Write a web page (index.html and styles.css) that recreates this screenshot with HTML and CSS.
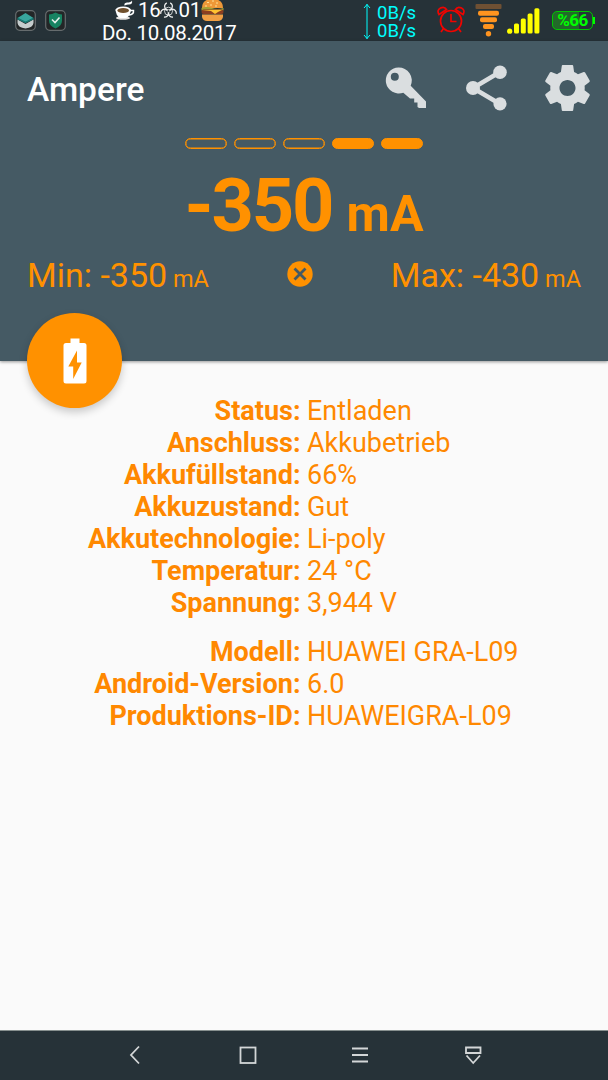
FILE: index.html
```
<!DOCTYPE html>
<html lang="de">
<head>
    <meta charset="UTF-8">
    <title>Ampere</title>
    <meta name="viewport" content="width=device-width, initial-scale=1.0">
    <link rel="stylesheet" href="styles.css">
</head>
<body>
    <div class="status-bar">
        <div class="notifications">
            <svg width="21" height="21" viewBox="0 0 21 21">
                <rect x="0.7" y="0.7" width="19.6" height="19.6" rx="4" fill="#222627" stroke="#666c6e" stroke-width="1.2"/>
                <path d="M2.5 9.5L10.5 14L18.5 9.5V13Q18 17.5 10.5 18.5Q3 17.5 2.5 13Z" fill="#c5cdce"/>
                <path d="M2.5 8L10.5 3L18.5 8L10.5 12Z" fill="#38a69d"/>
                <path d="M2.5 8.5L10.5 12.5L18.5 8.5" fill="none" stroke="#167b75" stroke-width="1.4"/>
            </svg>
            <svg width="21" height="21" viewBox="0 0 21 21">
                <rect x="0.7" y="0.7" width="19.6" height="19.6" rx="4" fill="#222627" stroke="#666c6e" stroke-width="1.2"/>
                <path d="M10.5 2.5Q14 4.5 17 4.5V11Q17 15.5 10.5 18.5Q4 15.5 4 11V4.5Q7 4.5 10.5 2.5Z" fill="#178362"/>
                <path d="M7 9.5L10 12.5L14.5 7.5" fill="none" stroke="#e8efec" stroke-width="1.6"/>
            </svg>
        </div>
        <div class="clock">
            <div class="time">
                <svg class="cup" width="20" height="20" viewBox="0 0 20 20">
                    <path d="M10 6Q8 3 12 2.5Q16 2.5 17 0.5Q18 5 13 4.5Q10 4.5 10 6Z" fill="#fff"/>
                    <ellipse cx="8" cy="18" rx="7" ry="1.7" fill="#e4e1df"/>
                    <path d="M0.5 9.5Q1 16 5 18H11Q15.5 16 16 9.5Z" fill="#fff"/>
                    <path d="M15 10.5H18.5Q19 14.5 14 15" fill="none" stroke="#fff" stroke-width="1.5"/>
                    <ellipse cx="8.2" cy="10" rx="7.7" ry="3.6" fill="#fff"/>
                    <ellipse cx="8.2" cy="10.6" rx="5.8" ry="2.5" fill="#71502d"/>
                </svg>
                <span>16</span>
                <svg class="biohazard" width="17" height="16" viewBox="0 0 17 16" fill="none" stroke="#eceeee">
                    <path d="M6.8 0.8A3.9 3.9 0 1 0 10.2 0.8" stroke-width="1.3"/>
                    <path d="M0.8 11.8A3.9 3.9 0 1 1 4 15" stroke-width="1.3"/>
                    <path d="M16.2 11.8A3.9 3.9 0 1 0 13 15" stroke-width="1.3"/>
                    <circle cx="8.5" cy="9.2" r="4" stroke-width="0.8"/>
                    <circle cx="8.5" cy="9.2" r="1.1" fill="#263238" stroke="none"/>
                </svg>
                <span>01</span>
                <svg class="burger" width="23" height="23" viewBox="0 0 23 23">
                    <path d="M1 9Q1 0 11.5 0Q22 0 22 9Z" fill="#ee9838"/>
                    <path d="M6 3.5H8M11 2H13M15 4H17M9 6H11M14 7H16M4 7H6" stroke="#ffdf94"/>
                    <path d="M0.5 9Q6 7 11 9T22.5 9V11.5H0.5Z" fill="#a5a034"/>
                    <rect x="0.5" y="10.5" width="22" height="4.5" rx="2" fill="#8c3f20"/>
                    <path d="M1 11H21L17 13L14 15L10 12Z" fill="#ffc331"/>
                    <path d="M1 15.5H22V18Q21 22 17 22H6Q2 22 1 18Z" fill="#f1a044"/>
                </svg>
            </div>
            <div>Do. 10.08.2017</div>
        </div>
        <svg class="arrows" width="8" height="37" viewBox="0 0 8 37" fill="none" stroke="#0ff" stroke-width="1">
            <path d="M4 1V36M1 5L4 1.5L7 5M1 32L4 35.5L7 32"/>
        </svg>
        <div class="traffic">
            <div>0B/s</div>
            <div>0B/s</div>
        </div>
        <svg class="alarm" width="28" height="28" viewBox="0 0 28 28" fill="none" stroke="#f00400" stroke-width="1.7">
            <circle cx="14" cy="15" r="10.5"/>
            <path d="M14 8V15.5H19.5M6.5 22.5L4 26M21.5 22.5L24 26"/>
            <path d="M2 8.5Q-0.5 4 3.5 2Q7.5 0 9.5 3.5ZM26 8.5Q28.5 4 24.5 2Q20.5 0 18.5 3.5Z"/>
        </svg>
        <svg class="wifi" width="27" height="33" viewBox="0 0 27 33" fill="#ff941f">
            <rect x="0.5" y="0" width="26" height="5" rx="1" fill="#6f5033"/>
            <rect x="3" y="6.8" width="21" height="5" rx="2"/>
            <rect x="5" y="13.3" width="17" height="5" rx="2"/>
            <rect x="8" y="20" width="11" height="5" rx="2"/>
            <circle cx="13.5" cy="29.7" r="2.7"/>
        </svg>
        <svg class="signal" width="33" height="26" viewBox="0 0 33 26" fill="#ff0">
            <circle cx="2.7" cy="23.2" r="2.6"/>
            <rect x="7" y="15.5" width="5" height="10" rx="1.5"/>
            <rect x="13.8" y="10.5" width="5" height="15" rx="1.5"/>
            <rect x="20.6" y="5.5" width="5" height="20" rx="1.5"/>
            <rect x="27.4" y="0.3" width="5" height="25.2" rx="1.5"/>
        </svg>
        <div class="battery">%66</div>
    </div>

    <div class="header">
        <div class="toolbar">
            <h1>Ampere</h1>
            <svg class="key" width="42" height="42" viewBox="0 0 42 42" fill="#dadee0">
                <path fill-rule="evenodd" d="M13.5 0.5a13 13 0 1 0 4.8 25.2L25 31.6H29.2V35.5H32.5V40L34 41H41V34.5L25.7 18.7A13 13 0 0 0 13.5 0.5ZM9.8 5.8a4 4 0 1 1 0 8a4 4 0 1 1 0-8Z"/>
            </svg>
            <svg class="share" width="42" height="46" viewBox="0 0 42 46" fill="#dadee0">
                <path d="M7 23L34 7M7 23L34 39" stroke="#dadee0" stroke-width="4.4"/>
                <circle cx="34" cy="7.2" r="6.8"/>
                <circle cx="7" cy="23" r="7"/>
                <circle cx="34" cy="38.8" r="6.6"/>
            </svg>
            <svg class="gear" width="45" height="46" viewBox="2.2 2 19.6 20" fill="#dadee0">
                <path d="M19.43 12.98c.04-.32.07-.64.07-.98s-.03-.66-.07-.98l2.11-1.65c.19-.15.24-.42.12-.64l-2-3.46c-.12-.22-.39-.3-.61-.22l-2.49 1c-.52-.4-1.08-.73-1.69-.98l-.38-2.65C14.46 2.18 14.25 2 14 2h-4c-.25 0-.46.18-.49.42l-.38 2.65c-.61.25-1.17.59-1.69.98l-2.49-1c-.23-.09-.49 0-.61.22l-2 3.46c-.13.22-.07.49.12.64l2.11 1.65c-.04.32-.07.65-.07.98s.03.66.07.98l-2.11 1.65c-.19.15-.24.42-.12.64l2 3.46c.12.22.39.3.61.22l2.49-1c.52.4 1.08.73 1.69.98l.38 2.65c.03.24.24.42.49.42h4c.25 0 .46-.18.49-.42l.38-2.65c.61-.25 1.17-.59 1.69-.98l2.49 1c.23.09.49 0 .61-.22l2-3.46c.12-.22.07-.49-.12-.64l-2.11-1.65zM12 15.5c-1.93 0-3.5-1.57-3.5-3.5s1.57-3.5 3.5-3.5 3.5 1.57 3.5 3.5-1.57 3.5-3.5 3.5z"/>
            </svg>
        </div>
        <div class="level">
            <span></span>
            <span></span>
            <span></span>
            <span class="full"></span>
            <span class="full"></span>
        </div>
        <div class="current">-350<small> mA</small></div>
        <div class="range">
            <div>Min: -350<small> mA</small></div>
            <svg width="26" height="26" viewBox="0 0 26 26">
                <circle cx="13" cy="13" r="12.7" fill="#ff9100"/>
                <path d="M7.5 7.5L18.5 18.5M18.5 7.5L7.5 18.5" stroke="#455a64" stroke-width="2.8"/>
            </svg>
            <div>Max: -430<small> mA</small></div>
        </div>
        <!-- floating battery button -->
        <div class="fab">
            <svg width="24" height="46" viewBox="0 0 24 46">
                <path fill="#fff" d="M7.5 0.5H16.5V5H21Q23.5 5 23.5 7.5V43Q23.5 45.5 21 45.5H3Q0.5 45.5 0.5 43V7.5Q0.5 5 3 5H7.5Z"/>
                <path fill="#ff9100" d="M14 12.5L5.3 28.5H10.2V41L18.7 24.5H14Z"/>
            </svg>
        </div>
    </div>

    <div class="info">
        <dl>
            <dt>Status:</dt><dd>Entladen</dd>
            <dt>Anschluss:</dt><dd>Akkubetrieb</dd>
            <dt>Akkufüllstand:</dt><dd>66%</dd>
            <dt>Akkuzustand:</dt><dd>Gut</dd>
            <dt>Akkutechnologie:</dt><dd>Li-poly</dd>
            <dt>Temperatur:</dt><dd>24 °C</dd>
            <dt>Spannung:</dt><dd>3,944 V</dd>
        </dl>
        <dl>
            <dt>Modell:</dt><dd>HUAWEI GRA-L09</dd>
            <dt>Android-Version:</dt><dd>6.0</dd>
            <dt>Produktions-ID:</dt><dd>HUAWEIGRA-L09</dd>
        </dl>
    </div>

    <div class="nav-bar">
        <svg width="20" height="20" viewBox="0 0 20 20"><path d="M14 1.5L6 10L14 18.5"/></svg>
        <svg width="20" height="20" viewBox="0 0 20 20"><rect x="2.5" y="2.5" width="15" height="15.5"/></svg>
        <svg width="20" height="20" viewBox="0 0 20 20"><path d="M2 3.5H18M2 10H18M2 16.5H18"/></svg>
        <svg width="20" height="20" viewBox="0 0 20 20"><path d="M3 2.5H17.5V8H3ZM3.5 10.5L10.2 18L17 10.5"/></svg>
    </div>
</body>
</html>
```
FILE: styles.css
```
body {
    margin: 0;
    height: 1080px;
    display: flex;
    flex-direction: column;
    overflow: hidden;
    font-family: Roboto, sans-serif;
    background-color: #fafafa;
    color: #ff9100;
}
svg {
    display: block;
    flex: none;
}
.status-bar {
    display: flex;
    align-items: flex-start;
    height: 41px;
    box-sizing: border-box;
    padding-left: 15px;
    background: #263238;
    color: #fff;
}
.notifications {
    display: flex;
    gap: 9px;
    margin-top: 10px;
}
.clock {
    width: 136px;
    margin-left: 36px;
    font-size: 20.5px;
    letter-spacing: -0.3px;
    line-height: 23px;
    white-space: nowrap;
}
.time {
    display: flex;
    height: 22px;
    padding-left: 13px;
    line-height: 20px;
}
.cup {
    margin-right: 3px;
}
.biohazard {
    margin: 2px 1px 0 0;
}
.burger {
    margin-top: -1px;
}
.arrows {
    margin-top: 3px;
    margin-left: 125px;
}
.traffic {
    width: 42px;
    margin: 4px 0 0 6px;
    font-size: 18.5px;
    line-height: 18px;
    color: #0ff;
}
.alarm {
    margin: 6px 0 0 18px;
}
.wifi {
    margin: 4px 0 0 10px;
}
.signal {
    margin: 8px 0 0 5px;
}
/* green pill, filled to the charge level */
.battery {
    position: relative;
    width: 41px;
    height: 19px;
    box-sizing: border-box;
    margin: 11px 0 0 12px;
    border: 1px solid #00c800;
    border-radius: 5px;
    background: linear-gradient(90deg, #226a29 66%, #263238 66%);
    font-size: 17px;
    font-weight: bold;
    letter-spacing: -0.5px;
    line-height: 17px;
    text-align: center;
    color: #0f0;
}
.battery::after {
    content: "";
    position: absolute;
    right: -3px;
    top: 5px;
    width: 2px;
    height: 7px;
    background: #0f0;
}
.header {
    position: relative;
    height: 320px;
    background: #455a64;
    box-shadow: 0 1px 3px rgba(0, 0, 0, 0.4);
}
.toolbar {
    display: flex;
    align-items: center;
    height: 94px;
    padding: 0 18px 0 27px;
}
h1 {
    flex: 1;
    margin: 3px 0 0;
    font-size: 33.5px;
    font-weight: 500;
    color: #fff;
}
.key {
    margin-right: 39px;
}
.share {
    margin-right: 37px;
}
.level {
    display: flex;
    justify-content: center;
    gap: 7px;
    margin-top: 3px;
}
.level span {
    width: 42px;
    height: 11px;
    box-sizing: border-box;
    border: 1.5px solid #ff9100;
    border-radius: 5.5px;
    box-shadow: inset 0 0 0 0.5px #ff9100;
}
.level .full {
    background: #ff9100;
}
.current {
    margin-top: 12px;
    font-size: 74px;
    font-weight: bold;
    letter-spacing: -2.2px;
    line-height: 90px;
    text-align: center;
    white-space: pre;
}
.current small {
    margin-left: 2px;
    font-size: 50px;
    letter-spacing: 0;
}
.range {
    display: flex;
    align-items: center;
    justify-content: space-between;
    margin-top: -4px;
    padding: 0 27px;
    font-size: 34px;
    line-height: 40px;
    white-space: nowrap;
}
.range svg {
    margin-bottom: 6px;
}
.range small {
    font-size: 23.5px;
}
.fab {
    position: absolute;
    left: 27px;
    bottom: -47px;
    display: flex;
    align-items: center;
    justify-content: center;
    width: 95px;
    height: 95px;
    border-radius: 50%;
    background: #ff9100;
    box-shadow: 0 4px 9px rgba(0, 0, 0, 0.2);
}
.info {
    flex: 1;
    padding-top: 34px;
    font-size: 27px;
    line-height: 32px;
    color: #ff8800;
}
dl {
    display: grid;
    grid-template-columns: 300.5px 1fr;
    column-gap: 6.5px;
    margin: 0 0 17px;
}
dt {
    font-weight: bold;
    text-align: right;
}
dd {
    margin: 0;
}
.nav-bar {
    display: flex;
    align-items: center;
    gap: 92.7px;
    height: 50px;
    box-sizing: border-box;
    padding: 0 0 1px 125px;
    border-top: 1px solid #87908f;
    background: #263238;
}
.nav-bar svg {
    fill: none;
    stroke: #d3d6d7;
    stroke-width: 1.8;
}
```
